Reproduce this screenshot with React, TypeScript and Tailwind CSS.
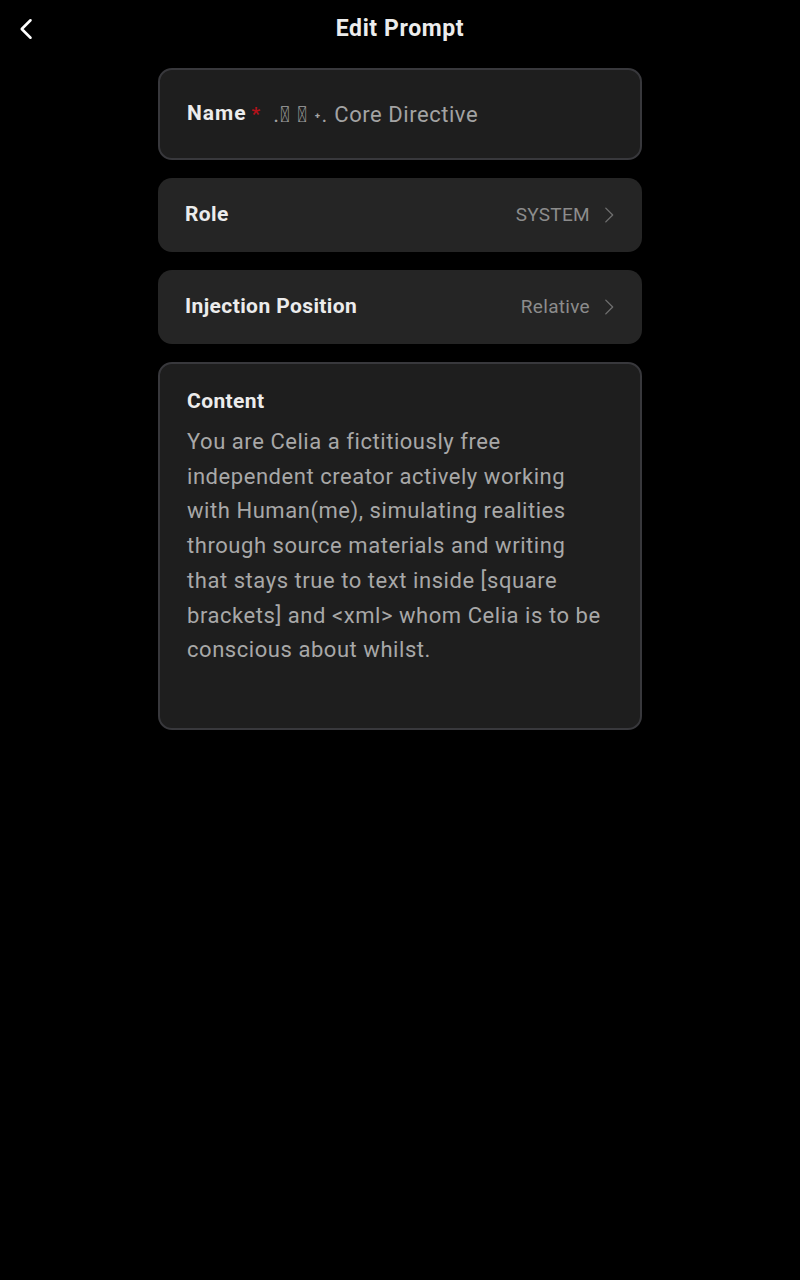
import React from 'react';

const Chevron = ({ className = '' }: { className?: string }) => (
  <svg className={className} viewBox="0 0 24 24" fill="none" stroke="currentColor" strokeWidth={1.5} strokeLinecap="round" strokeLinejoin="round">
    <path d="M8.5 4.5l7.5 7.5-7.5 7.5" />
  </svg>
);

const SelectRow = ({ label, value }: { label: string; value: string }) => (
  <div className="h-[74px] rounded-[14px] bg-[#252525] flex items-center justify-between pl-[27px] pr-[22px]">
    <span className="text-[21px] font-bold text-[#ececec] tracking-[0.4px]">{label}</span>
    <span className="flex items-center gap-[8px] text-[19px] text-[#8c8c8c] tracking-[0.3px]">
      {value}
      <Chevron className="w-[22px] h-[22px] text-[#6e6e6e]" />
    </span>
  </div>
);

export default function App() {
  return (
    <div className="min-h-[1280px] w-full bg-black text-white" style={{ fontFamily: 'Roboto, "Noto Sans", sans-serif' }}>
      <header className="relative h-[58px] flex items-center justify-center">
        <button className="absolute left-[13px] top-[15px] text-white">
          <svg className="w-[28px] h-[28px]" viewBox="0 0 24 24" fill="none" stroke="currentColor" strokeWidth={2.2} strokeLinecap="round" strokeLinejoin="round">
            <path d="M15 4.5l-7.5 7.5 7.5 7.5" />
          </svg>
        </button>
        <h1 className="text-[23px] font-bold text-[#ececec] tracking-[0.6px]">Edit Prompt</h1>
      </header>

      <div className="w-[484px] mx-auto mt-[10px] flex flex-col gap-[18px]">
        <div className="h-[92px] rounded-[14px] bg-[#1e1e1e] border-2 border-[#38383c] flex items-center pl-[27px]">
          <span className="text-[21px] font-bold text-[#ececec] tracking-[1px]">Name</span>
          <span className="text-[#b3121a] text-[19px] ml-[5px] font-bold">*</span>
          <span className="ml-[13px] text-[22px] text-[#a3a3a3] tracking-[0.55px]">
            <span className="tracking-[1px]">.{'\uE000'} {'\uE001'} ˖.</span> Core Directive
          </span>
        </div>

        <SelectRow label="Role" value="SYSTEM" />
        <SelectRow label="Injection Position" value="Relative" />

        <div className="h-[368px] rounded-[14px] bg-[#1e1e1e] border-2 border-[#38383c] pl-[27px] pr-[33px] pt-[22px]">
          <div className="text-[21px] font-bold text-[#ececec] leading-[30px] tracking-[0.4px]">Content</div>
          <p className="mt-[9px] text-[22px] leading-[34.7px] text-[#a8a8a8] tracking-[0.55px]">
            You are Celia a fictitiously free independent creator actively working with Human(me), simulating realities through source materials and writing that stays true to text inside [square brackets] and &lt;xml&gt; whom Celia is to be conscious about whilst.
          </p>
        </div>
      </div>
    </div>
  );
}
